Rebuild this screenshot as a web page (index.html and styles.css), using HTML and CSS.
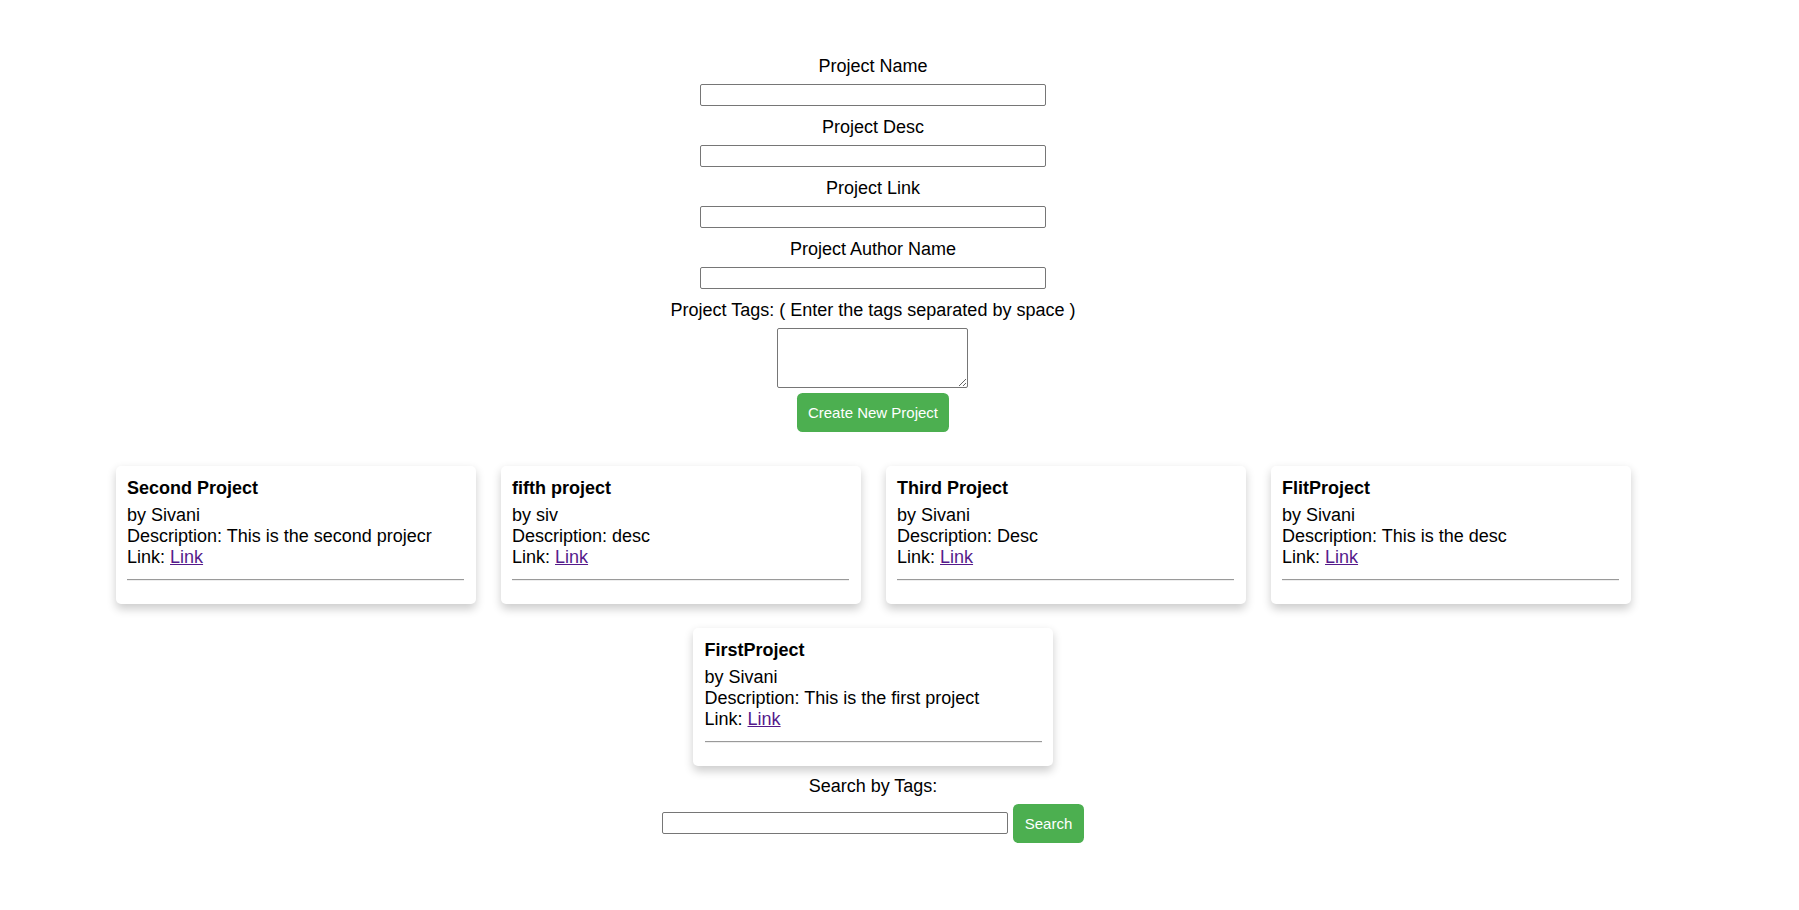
FILE: index.html
```html
<!DOCTYPE html>
<html lang="en">
<head>
<meta charset="utf-8">
<title>Projects</title>
<link rel="stylesheet" href="styles.css">
</head>
<body>
<div class="page">
  <form class="create-form">
    <label class="field-label" for="pname">Project Name</label>
    <input class="text-input" id="pname" type="text">
    <label class="field-label" for="pdesc">Project Desc</label>
    <input class="text-input" id="pdesc" type="text">
    <label class="field-label" for="plink">Project Link</label>
    <input class="text-input" id="plink" type="text">
    <label class="field-label" for="pauthor">Project Author Name</label>
    <input class="text-input" id="pauthor" type="text">
    <label class="field-label" for="ptags">Project Tags: ( Enter the tags separated by space )</label>
    <textarea class="tags-input" id="ptags"></textarea>
    <button class="btn btn-create" type="button">Create New Project</button>
  </form>

  <div class="cards">
    <div class="card">
      <div class="card-title">Second Project</div>
      <div class="card-line">by Sivani</div>
      <div class="card-line">Description: This is the second projecr</div>
      <div class="card-line">Link: <a href="#" class="card-link">Link</a></div>
      <hr class="card-rule">
    </div>
    <div class="card">
      <div class="card-title">fifth project</div>
      <div class="card-line">by siv</div>
      <div class="card-line">Description: desc</div>
      <div class="card-line">Link: <a href="#" class="card-link">Link</a></div>
      <hr class="card-rule">
    </div>
    <div class="card">
      <div class="card-title">Third Project</div>
      <div class="card-line">by Sivani</div>
      <div class="card-line">Description: Desc</div>
      <div class="card-line">Link: <a href="#" class="card-link">Link</a></div>
      <hr class="card-rule">
    </div>
    <div class="card">
      <div class="card-title">FlitProject</div>
      <div class="card-line">by Sivani</div>
      <div class="card-line">Description: This is the desc</div>
      <div class="card-line">Link: <a href="#" class="card-link">Link</a></div>
      <hr class="card-rule">
    </div>
    <div class="card">
      <div class="card-title">FirstProject</div>
      <div class="card-line">by Sivani</div>
      <div class="card-line">Description: This is the first project</div>
      <div class="card-line">Link: <a href="#" class="card-link">Link</a></div>
      <hr class="card-rule">
    </div>
  </div>

  <div class="search">
    <label class="search-label" for="stags">Search by Tags:</label>
    <div class="search-row">
      <input class="text-input search-input" id="stags" type="text">
      <button class="btn btn-search" type="button">Search</button>
    </div>
  </div>
</div>
</body>
</html>
```

FILE: styles.css
```css
html, body {
  margin: 0;
  padding: 0;
  background: #ffffff;
}

body {
  font-family: "Liberation Sans", Arial, sans-serif;
  font-size: 18px;
  color: #000000;
}

.page {
  width: 1746px;
  display: flex;
  flex-direction: column;
  align-items: center;
  padding-top: 56px;
}

.create-form {
  display: flex;
  flex-direction: column;
  align-items: center;
}

.field-label {
  display: block;
  line-height: 20.7px;
  margin-bottom: 6.8px;
}

.text-input {
  box-sizing: border-box;
  width: 346px;
  height: 22px;
  margin: 0 0 11.5px 0;
  padding: 1px 2px;
  border: 1px solid #767676;
  border-radius: 2px;
  font-family: "Liberation Sans", Arial, sans-serif;
  font-size: 15px;
  background: #ffffff;
}

.tags-input {
  box-sizing: border-box;
  width: 191px;
  height: 60px;
  margin: 0;
  padding: 2px;
  border: 1px solid #767676;
  border-radius: 2px;
  font-family: "Liberation Mono", monospace;
  font-size: 15px;
}

.btn {
  box-sizing: border-box;
  border: none;
  border-radius: 5.5px;
  background: #4caf50;
  color: #ffffff;
  font-family: "Liberation Sans", Arial, sans-serif;
  font-size: 15px;
  line-height: 17px;
  padding: 11px 0;
  text-align: center;
  white-space: nowrap;
  cursor: pointer;
}

.btn-create {
  width: 152px;
  height: 39px;
  margin-top: 5.7px;
}

.cards {
  margin-top: 33.6px;
  width: 1746px;
  display: flex;
  flex-wrap: wrap;
  justify-content: center;
  column-gap: 25px;
  row-gap: 23.6px;
}

.card {
  box-sizing: border-box;
  width: 360px;
  padding: 12px 11.5px 11px;
  border-radius: 5px;
  background: #ffffff;
  box-shadow: 0 4.5px 10px 0 rgba(0, 0, 0, 0.2);
  text-align: left;
}

.card-title {
  font-weight: bold;
  line-height: 20.7px;
  margin-bottom: 7px;
}

.card-line {
  line-height: 20.7px;
}

.card-link {
  color: #551a8b;
  text-decoration: underline;
}

.card-rule {
  margin: 11.5px 0 12px 0;
  height: 0;
  border: none;
  border-top: 1px solid #9a9a9a;
  border-bottom: 1px solid #eeeeee;
}

.search {
  margin-top: 9.5px;
  display: flex;
  flex-direction: column;
  align-items: center;
}

.search-label {
  display: block;
  line-height: 20.7px;
}

.search-row {
  margin-top: 7.5px;
  display: flex;
  align-items: center;
  gap: 5px;
}

.search-input {
  margin: 0;
}

.btn-search {
  width: 71px;
  height: 39px;
}
```
